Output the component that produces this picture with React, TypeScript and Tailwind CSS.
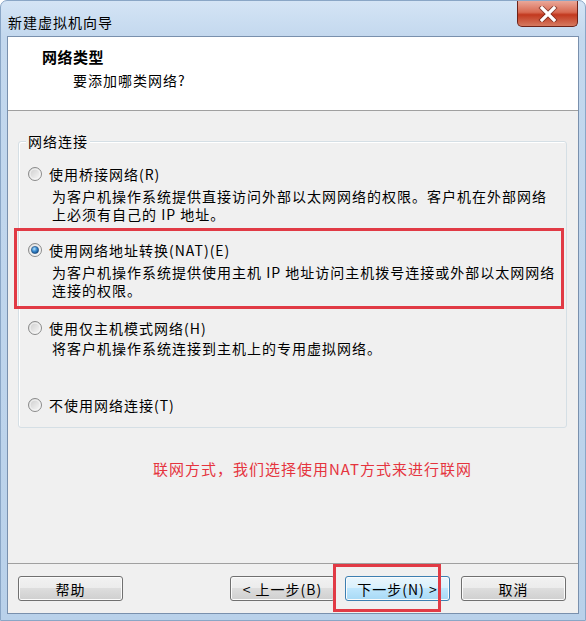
const font = "font-['Noto_Sans_CJK_SC','Noto_Sans',sans-serif]";

function Radio({ checked }: { checked?: boolean }) {
  return (
    <svg width="14" height="14" viewBox="0 0 14 14" className="shrink-0">
      <defs>
        <linearGradient id="radioBg" x1="0" y1="0" x2="1" y2="1">
          <stop offset="0" stopColor="#c9c9c9" />
          <stop offset="1" stopColor="#fdfdfd" />
        </linearGradient>
        <radialGradient id="radioDot" cx="0.4" cy="0.35" r="0.75">
          <stop offset="0" stopColor="#b8e3fb" />
          <stop offset="0.45" stopColor="#3a8bd0" />
          <stop offset="1" stopColor="#0e3d73" />
        </radialGradient>
      </defs>
      <circle cx="7" cy="7" r="6.5" fill="url(#radioBg)" stroke="#8a8b8b" />
      <circle cx="7" cy="7" r="5" fill="none" stroke="#f6f6f6" strokeWidth="0.9" />
      {checked && <circle cx="7" cy="7" r="3.6" fill="url(#radioDot)" stroke="#1b4b80" strokeWidth="0.6" />}
    </svg>
  );
}

function Option({
  label,
  lines,
  checked,
  className,
  descGap = 'mt-[4px]',
}: {
  label: string;
  lines?: string[];
  checked?: boolean;
  className?: string;
  descGap?: string;
}) {
  return (
    <div className={className}>
      <div className="flex items-center h-[18px] pl-[9px]">
        <Radio checked={checked} />
        <span className="ml-[7px]">{label}</span>
      </div>
      {lines && (
        <div className={`ml-[33px] ${descGap}`}>
          {lines.map((l) => (
            <div key={l} className="h-[18px]">
              {l}
            </div>
          ))}
        </div>
      )}
    </div>
  );
}

function Button({ children, primary, className }: { children: string; primary?: boolean; className?: string }) {
  return (
    <div
      className={`h-[25px] w-[105px] rounded-[3px] border flex items-center justify-center shadow-[inset_0_0_0_1px_#fbfbfb] ${
        primary
          ? 'border-[#3c7fb1] bg-[linear-gradient(180deg,#eaf6fd_0%,#d9f0fc_50%,#bee6fd_50%,#a7d9f5_100%)]'
          : 'border-[#707070] bg-[linear-gradient(180deg,#f2f2f2_0%,#ebebeb_50%,#dddddd_50%,#cfcfcf_100%)]'
      } ${className ?? ''}`}
    >
      {children}
    </div>
  );
}

export default function App() {
  return (
    <div
      className={`${font} relative w-[586px] h-[621px] flex flex-col rounded-t-[7px] border border-[#8aa6c6] bg-[linear-gradient(180deg,#d4e4f5_0px,#c3d8ee_36px,#b9d1ea_100%)] text-[14px] tracking-[1px] leading-[18px] text-black overflow-hidden`}
    >
      {/* Title bar */}
      <div className="h-[35px] flex items-start justify-between shrink-0">
        <div className="pl-[7px] pt-[12px] text-[14px]">新建虚拟机向导</div>
        <div className="mr-[7px] w-[61px] h-[26px] rounded-b-[5px] border border-t-0 border-[#6d2218] bg-[linear-gradient(180deg,#eaa899_0%,#d86a52_45%,#c2391f_55%,#d67a60_100%)] flex items-center justify-center">
          <svg width="20" height="16" viewBox="0 0 20 16">
            <path d="M4 2 L16 14 M16 2 L4 14" stroke="#5a1a10" strokeWidth="5" strokeLinecap="square" opacity="0.6" />
            <path d="M4 2 L16 14 M16 2 L4 14" stroke="#ffffff" strokeWidth="3.2" strokeLinecap="square" />
          </svg>
        </div>
      </div>

      {/* Content */}
      <div className="mx-[6px] mb-[6px] flex-1 flex flex-col border border-[#7990ad] bg-[#f0f0f0]">
        <div className="h-[74px] shrink-0 bg-white border-b border-[#a0a0a0]">
          <div className="pl-[34px] pt-[11px] font-bold text-[15px] tracking-[0.5px]">网络类型</div>
          <div className="pl-[65px] mt-[5px]">要添加哪类网络?</div>
        </div>

        <div className="flex-1 flex flex-col">
          <div className="relative ml-[10px] mr-[11px] mt-[30px] rounded-[3px] border border-[#d5dfe5] shadow-[inset_1px_1px_0_#ffffff] pt-[23px] pb-[13px]">
            <div className="absolute left-[7px] top-[-10px] px-[2px] bg-[#f0f0f0]">网络连接</div>
            <Option
              label="使用桥接网络(R)"
              lines={['为客户机操作系统提供直接访问外部以太网网络的权限。客户机在外部网络', '上必须有自己的 IP 地址。']}
            />
            <Option
              className="mt-[18px]"
              checked
              label="使用网络地址转换(NAT)(E)"
              lines={['为客户机操作系统提供使用主机 IP 地址访问主机拨号连接或外部以太网网络', '连接的权限。']}
            />
            <Option
              className="mt-[20px]"
              descGap="mt-[2px]"
              label="使用仅主机模式网络(H)"
              lines={['将客户机操作系统连接到主机上的专用虚拟网络。']}
            />
            <Option className="mt-[39px]" label="不使用网络连接(T)" />
          </div>

          <div className="mt-[32px] pl-[145px] text-[15px] tracking-[1px] text-[#e5343e]">
            联网方式，我们选择使用NAT方式来进行联网
          </div>
        </div>

        <div className="shrink-0 border-t border-[#a0a0a0] pt-[12px] pb-[12px] pl-[10px] pr-[12px] flex">
          <Button>帮助</Button>
          <Button className="ml-auto">&lt; 上一步(B)</Button>
          <Button primary className="ml-[10px]">下一步(N) &gt;</Button>
          <Button className="ml-[11px]">取消</Button>
        </div>
      </div>

      {/* Annotation boxes */}
      <div className="absolute left-[13px] top-[227px] w-[550px] h-[81px] border-[3px] border-[#e13a45]" />
      <div className="absolute left-[332px] top-[563px] w-[108px] h-[48px] border-[3px] border-[#e13a45]" />
    </div>
  );
}
